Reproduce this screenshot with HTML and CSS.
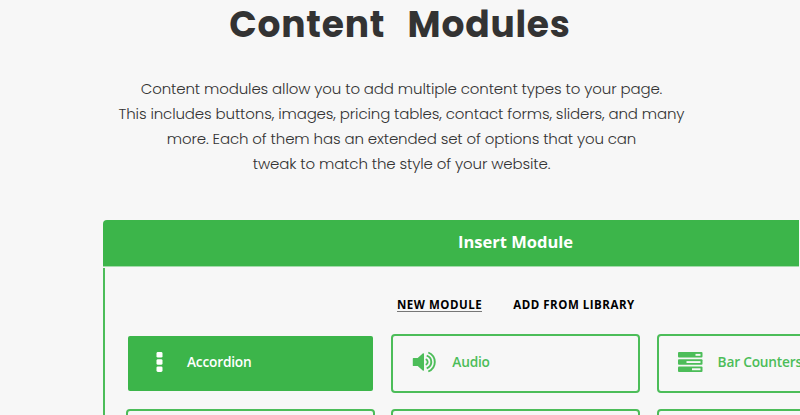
FILE: index.html
```
<!DOCTYPE html>
<html lang="en">
<head>
  <meta charset="UTF-8">
  <meta name="viewport" content="width=device-width, initial-scale=1.0">
  <title>Content Modules</title>
  <link rel="stylesheet" href="styles.css">
</head>
<body>

  <section class="intro">
    <h1>Content Modules</h1>
    <p>
      Content modules allow you to add multiple content types to your page.<br>
      This includes buttons, images, pricing tables, contact forms, sliders, and many<br>
      more. Each of them has an extended set of options that you can<br>
      tweak to match the style of your website.
    </p>
  </section>

  <section class="module-panel">
    <div class="panel-header"><h2>Insert Module</h2></div>
    <div class="panel-body">
      <div class="tabs">
        <a class="tab active">NEW MODULE</a>
        <a class="tab">ADD FROM LIBRARY</a>
      </div>
      <div class="module-grid">
        <div class="module active">
          <svg class="icon" width="26" height="22" viewBox="0 0 26 22" fill="currentColor">
            <rect x="9.5" y="1" width="6" height="5.6" rx="1.4"/>
            <rect x="9.5" y="8.2" width="6" height="5.6" rx="1.4"/>
            <rect x="9.5" y="15.4" width="6" height="5.6" rx="1.4"/>
          </svg>
          <span>Accordion</span>
        </div>
        <div class="module">
          <svg class="icon" width="26" height="22" viewBox="0 0 26 22" fill="none" stroke="currentColor" stroke-width="1.9">
            <path fill="currentColor" stroke="none" d="M1.4 7h4.3L11 2.3q1-.5 1 .6v16.2q0 1.1-1 .6L5.7 15H1.4q-.6 0-.6-.6V7.6q0-.6.6-.6z"/>
            <path d="M13.7 8.2q2 .7 2 2.8t-2 2.8"/>
            <path d="M14.7 4.7q4.6 1.6 4.6 6.3t-4.6 6.3"/>
            <path d="M16.3 1.5q6.5 2.8 6.5 9.5t-6.5 9.5"/>
          </svg>
          <span>Audio</span>
        </div>
        <div class="module">
          <svg class="icon" width="26" height="22" viewBox="0 0 26 22" fill="currentColor">
            <rect x="0" y="1" width="24.5" height="5.6" rx="1"/>
            <rect x="0" y="8.2" width="24.5" height="5.6" rx="1"/>
            <rect x="0" y="15.4" width="24.5" height="5.6" rx="1"/>
            <g fill="#f7f7f7">
              <rect x="17.5" y="2.9" width="5" height="1.9"/>
              <rect x="8.5" y="10.1" width="14" height="1.9"/>
              <rect x="14" y="17.3" width="8.5" height="1.9"/>
            </g>
          </svg>
          <span>Bar Counters</span>
        </div>
        <div class="module"></div>
        <div class="module"></div>
        <div class="module"></div>
      </div>
    </div>
  </section>

</body>
</html>
```
FILE: styles.css
```
body {
  margin: 0;
  height: 415px;
  overflow: hidden;
  background-color: #f7f7f7;
  font-family: "Open Sans", Arial, sans-serif;
}

.intro {
  height: 220px;
  text-align: center;
  font-family: Poppins, Inter, sans-serif;
}

h1 {
  margin: 0;
  padding-top: 2px;
  font-size: 36px;
  line-height: 46px;
  font-weight: 700;
  letter-spacing: 0.8px;
  word-spacing: 14px;
  color: #333;
}

.intro p {
  margin: 28px 0 0;
  padding-left: 3px;
  font-size: 15px;
  line-height: 25px;
  font-weight: 300;
  letter-spacing: -0.13px;
  color: #333;
}

.module-panel {
  width: 825px;
  margin-left: 103px;
}

.panel-header {
  width: 695.5px;
  height: 47px;
  background-color: #3cb54a;
  border-top-left-radius: 4px;
  border-bottom: 1px solid #a5dcac;
  box-sizing: border-box;
}

.panel-header h2 {
  width: 825px;
  margin: 0;
  font-size: 16.5px;
  line-height: 44px;
  font-weight: 700;
  text-align: center;
  color: #fff;
}

.panel-body {
  margin-top: 1px;
  padding: 29px 0 0 21px;
  border-left: 2px solid #4cbd59;
}

.tabs {
  display: flex;
  gap: 31px;
  padding-left: 271px;
  font-size: 11.5px;
  line-height: 16px;
  font-weight: 700;
  letter-spacing: 0.52px;
  color: #000;
}

.tab.active {
  height: 14px;
  border-bottom: 1px solid #777;
}

.module-grid {
  display: grid;
  grid-template-columns: repeat(3, 249px);
  gap: 16px 16.3px;
  margin-top: 21px;
}

.module {
  display: flex;
  align-items: center;
  height: 58.5px;
  padding-left: 19px;
  padding-bottom: 3px;
  box-sizing: border-box;
  border: 2px solid #4cbd59;
  border-radius: 4px;
  font-size: 13.7px;
  font-weight: 600;
  letter-spacing: -0.2px;
  white-space: nowrap;
  color: #4cbd59;
}

.module.active {
  border-color: transparent;
  background-color: #3cb54a;
  background-clip: padding-box;
  color: #fff;
}

.icon {
  flex: none;
  margin-right: 14px;
}
```
